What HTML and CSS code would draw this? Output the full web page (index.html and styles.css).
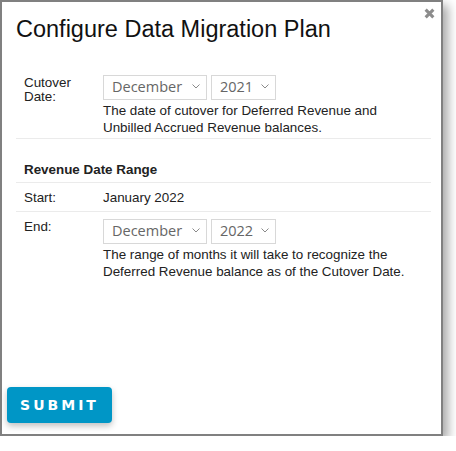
FILE: index.html
```html
<!DOCTYPE html>
<html lang="en">
<head>
<meta charset="utf-8">
<title>Configure Data Migration Plan</title>
<link rel="stylesheet" href="styles.css">
</head>
<body>
<div class="dialog">
  <button class="close" aria-label="Close">
    <svg viewBox="0 0 10 10" width="10" height="10"><path d="M1.5 1.5 L8.5 8.5 M8.5 1.5 L1.5 8.5" /></svg>
  </button>
  <h1 class="title">Configure Data Migration Plan</h1>
  <table class="form">
    <colgroup><col class="col-label"><col class="col-value"></colgroup>
    <tr class="row row-first">
      <th class="label">Cutover Date:</th>
      <td class="value">
        <div class="selects">
          <div class="select select-month">
            <select><option>December</option></select>
            <svg class="chev" viewBox="0 0 8 5" width="8" height="5"><path d="M0.5 0.5 L4 4 L7.5 0.5" /></svg>
          </div>
          <div class="select select-year">
            <select><option>2021</option></select>
            <svg class="chev" viewBox="0 0 8 5" width="8" height="5"><path d="M0.5 0.5 L4 4 L7.5 0.5" /></svg>
          </div>
        </div>
        <p class="help">The date of cutover for Deferred Revenue and Unbilled Accrued Revenue balances.</p>
      </td>
    </tr>
    <tr class="row row-section">
      <th class="section" colspan="2">Revenue Date Range</th>
    </tr>
    <tr class="row row-text">
      <th class="label">Start:</th>
      <td class="value value-text">January 2022</td>
    </tr>
    <tr class="row row-end">
      <th class="label">End:</th>
      <td class="value">
        <div class="selects">
          <div class="select select-month">
            <select><option>December</option></select>
            <svg class="chev" viewBox="0 0 8 5" width="8" height="5"><path d="M0.5 0.5 L4 4 L7.5 0.5" /></svg>
          </div>
          <div class="select select-year">
            <select><option>2022</option></select>
            <svg class="chev" viewBox="0 0 8 5" width="8" height="5"><path d="M0.5 0.5 L4 4 L7.5 0.5" /></svg>
          </div>
        </div>
        <p class="help">The range of months it will take to recognize the Deferred Revenue balance as of the Cutover Date.</p>
      </td>
    </tr>
  </table>
  <div class="footer">
    <button class="submit">SUBMIT</button>
  </div>
</div>
</body>
</html>
```
FILE: styles.css
```css
html, body {
  margin: 0;
  padding: 0;
  background: #ffffff;
}

body {
  font-family: "Liberation Sans", Arial, sans-serif;
  color: #222222;
}

.dialog {
  position: relative;
  box-sizing: border-box;
  width: 443px;
  height: 436px;
  border: 2px solid #808080;
  background: #ffffff;
  box-shadow: 5px 5px 10px rgba(0, 0, 0, 0.35);
  display: flex;
  flex-direction: column;
}

.close {
  position: absolute;
  top: 6px;
  right: 6px;
  width: 11px;
  height: 11px;
  padding: 0;
  border: 0;
  background: none;
  cursor: pointer;
}

.close svg {
  display: block;
  width: 11px;
  height: 11px;
}

.close path {
  stroke: #8c8c8c;
  stroke-width: 2.8;
  fill: none;
}

.title {
  margin: 0;
  padding: 14px 0 0 14px;
  font-size: 23.5px;
  line-height: 26px;
  font-weight: normal;
  color: #111111;
}

.form {
  margin: 26px 0 0 14px;
  width: 415px;
  border-collapse: separate;
  border-spacing: 0;
  table-layout: fixed;
  font-size: 13.4px;
}

.col-label {
  width: 79px;
}

.label {
  padding: 8px 8px 0 8px;
  font-weight: normal;
  text-align: left;
  vertical-align: top;
  line-height: 14px;
}

.value {
  padding: 7px 8px 2px 8px;
  vertical-align: top;
  line-height: 17px;
}

.row-section th,
.row-text th,
.row-text td,
.row-end th,
.row-end td {
  border-top: 1px solid #ebebeb;
}

.section {
  padding: 22px 8px 4px 8px;
  text-align: left;
  font-weight: bold;
  line-height: 17px;
}

.value-text {
  padding-top: 6px;
  padding-bottom: 5px;
}

.selects {
  display: flex;
  gap: 4px;
}

.select {
  position: relative;
}

.select select {
  -webkit-appearance: none;
  appearance: none;
  display: block;
  box-sizing: border-box;
  height: 25px;
  margin: 0;
  padding: 0 0 2px 8px;
  border: 1px solid #d8d8d8;
  border-radius: 0;
  background: #ffffff;
  font-family: "Open Sans", "Noto Sans", sans-serif;
  font-size: 14.5px;
  color: #666666;
  outline: none;
}

.select-month select {
  width: 104px;
}

.select-year select {
  width: 65px;
}

.chev {
  position: absolute;
  top: 9px;
  right: 7px;
  pointer-events: none;
}

.chev path {
  stroke: #8a8a8a;
  stroke-width: 1;
  fill: none;
}

.help {
  margin: 2px 0 0 0;
  line-height: 17px;
}

.footer {
  margin-top: auto;
  padding: 0 0 11px 5px;
}

.submit {
  display: flex;
  align-items: center;
  justify-content: center;
  width: 105px;
  height: 36px;
  padding: 0;
  border: 0;
  border-radius: 4px;
  background: #0096c6;
  color: #ffffff;
  font-family: "DejaVu Sans", Verdana, sans-serif;
  font-weight: bold;
  font-size: 14px;
  letter-spacing: 3px;
  box-shadow: 0 3px 6px rgba(0, 0, 0, 0.25);
  cursor: pointer;
}
```
